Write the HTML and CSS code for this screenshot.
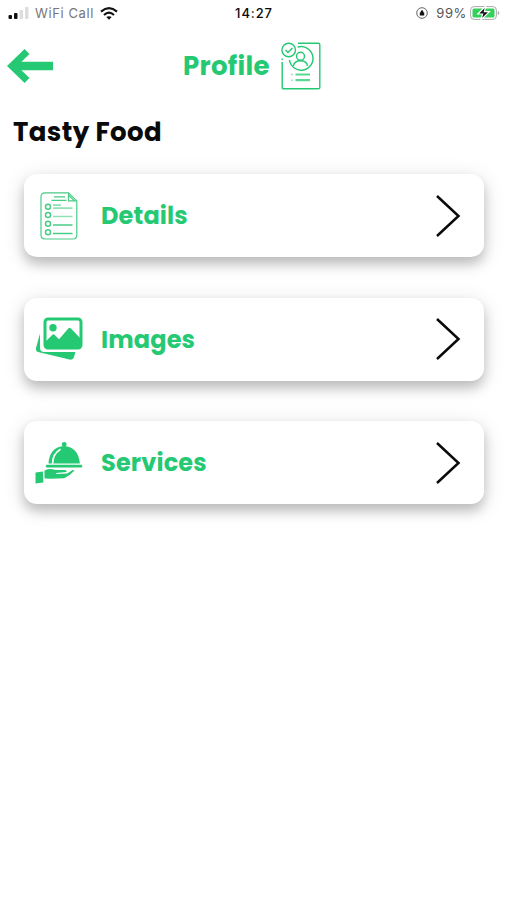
FILE: index.html
```
<!DOCTYPE html>
<html lang="en">
<head>
  <meta charset="UTF-8">
  <meta name="viewport" content="width=device-width, initial-scale=1.0">
  <title>Profile</title>
  <link rel="stylesheet" href="styles.css">
</head>
<body>
  <div class="status-bar">
    <div class="status-left">
      <svg width="22" height="12" viewBox="0 0 22 12">
        <rect x="0.5" y="8" width="3.5" height="4" rx="1" fill="#111"/>
        <rect x="6" y="6" width="3.5" height="6" rx="1" fill="#111"/>
        <rect x="11.5" y="3" width="3.5" height="9" rx="1" fill="#ddd"/>
        <rect x="17" y="0" width="3.5" height="12" rx="1" fill="#ddd"/>
      </svg>
      <span class="carrier">WiFi Call</span>
      <svg class="wifi" width="18" height="13" viewBox="0 0 18 13" fill="none" stroke="#111" stroke-width="2.1">
        <path d="M1 4.6Q9-2.2 17 4.6M4 8Q9 3.4 14 8"/>
        <path d="M6.3 10.1Q9 8.2 11.7 10.1L9 12.8Z" fill="#111" stroke="none"/>
      </svg>
    </div>
    <span class="time">14:27</span>
    <div class="status-right">
      <svg width="12" height="12" viewBox="0 0 12 12" fill="none" stroke="#555">
        <circle cx="6" cy="6" r="5.3" stroke-width=".9"/>
        <path d="M3.8 8.6V5.4h.7Q4.6 3.3 6 3.3t1.5 2.1h.7v3.2z" fill="#111" stroke="none"/>
      </svg>
      <span class="percent">99%</span>
      <svg width="30" height="14" viewBox="0 0 30 14">
        <rect x=".6" y=".6" width="25.8" height="12.8" rx="3.5" fill="#fff" stroke="#aaa"/>
        <rect x="2.5" y="2.5" width="22" height="9" rx="1.5" fill="#35d05c"/>
        <path d="M27.8 5v4q1.6-.5 1.6-2t-1.6-2" fill="#aaa"/>
        <path d="M15.8 0L7.8 8h4.8l-1.8 6 8.6-8.3h-5z" fill="#111" stroke="#fff" stroke-width="1.2"/>
      </svg>
    </div>
  </div>

  <div class="header">
    <svg class="back" width="47" height="35" viewBox="0 0 47 35" fill="none" stroke="#26c973">
      <path d="M46 17H6" stroke-width="8.5"/>
      <path d="M20 2.5L5 17 20 31.5" stroke-width="7"/>
    </svg>
    <h1>Profile</h1>
    <svg class="profile-icon" width="40" height="48" viewBox="0 0 40 48" fill="none" stroke="#25c873" stroke-width="1.4">
      <path d="M17 1.2h20.5q1.3 0 1.3 1.3v43q0 1.3-1.3 1.3H2.5q-1.3 0-1.3-1.3V20M1.2 16.5v1.5"/>
      <circle cx="7.7" cy="8" r="6.8"/>
      <path d="M4.5 8l2.4 2.5 4.6-4.6M16.5 5.2A11.8 11.8 0 1 1 8.5 18"/>
      <circle cx="19.5" cy="14.3" r="4"/>
      <path d="M12.4 24q.8-5.3 7.1-5.3t7.1 5.3"/>
      <path d="M14.5 32.5H29M14.5 38.2H29" stroke-width="2.2" opacity=".75"/>
      <path d="M10 32.5h2M10 38.2h2" stroke-width="1.5" opacity=".45"/>
    </svg>
  </div>

  <h2>Tasty Food</h2>

  <div class="menu">
    <div class="card">
      <div class="icon">
        <svg width="38" height="48" viewBox="0 0 38 48" fill="none" stroke="#48cc86" stroke-width="1.2">
          <path d="M5 .9h23.5l8.3 8V43q0 4-4 4H5q-4 0-4-4V5Q1 .9 5 .9z"/>
          <path d="M28.5.9v8h8.3M28.5 3l6 5.9"/>
          <path d="M14 4.8h11M11.5 8.3h15" stroke-width="1.3"/>
          <g stroke-width="1.5">
            <circle cx="8" cy="14.7" r="2.5"/>
            <circle cx="8" cy="23" r="2.5"/>
            <circle cx="8" cy="31.7" r="2.5"/>
            <circle cx="8" cy="40.3" r="2.5"/>
          </g>
          <path d="M13 13.2h8M13 16.2h19.5M13 24.5h19.5" stroke-width="1.7" opacity=".6"/>
          <path d="M13 33h19.5M13 41.5h19.5" stroke-width="1.7"/>
        </svg>
      </div>
      <span class="label">Details</span>
      <svg class="chevron" width="26" height="44" viewBox="0 0 26 44"><path d="M2 2l21.5 20L2 42"/></svg>
    </div>

    <div class="card">
      <div class="icon">
        <svg width="48" height="44" viewBox="0 0 48 44">
          <path d="M5 16.5v14.5q0 4 4.5 4h31l-1.5 5q-1 3.3-4.5 2.5L3 35Q.5 34 1 31z" fill="#26c973"/>
          <rect x="10" y="2" width="36" height="29" rx="3" fill="#fff" stroke="#26c973" stroke-width="3"/>
          <circle cx="18" cy="10.7" r="3.7" fill="#26c973"/>
          <path d="M10.5 24.5l7-6.8q1-.9 2 0l4.5 4.5 9.3-10.8q1.3-1.4 2.6 0L46 22v8.5H10.5z" fill="#26c973"/>
        </svg>
      </div>
      <span class="label">Images</span>
      <svg class="chevron" width="26" height="44" viewBox="0 0 26 44"><path d="M2 2l21.5 20L2 42"/></svg>
    </div>

    <div class="card">
      <div class="icon">
        <svg width="48" height="42" viewBox="0 0 48 42" fill="#26c973">
          <circle cx="29.2" cy="2.5" r="2.4"/>
          <path d="M13.5 21.5Q14.5 5 29 4q14.5 1 15.8 17.5z"/>
          <path d="M17.6 21.7Q17.5 12 25.5 7.2" fill="none" stroke="#fff" stroke-width="1.7"/>
          <rect x="10.8" y="22.7" width="36.4" height="2.8" rx="1.2"/>
          <path d="M.5 30.5l7.4-1 .5 11-7.9 1z"/>
          <path d="M9.5 28.5q4-1.8 8-1.3l3 .7h10q2 .8.8 2.2l-10.1.9v.9l11-.3 5-3.4q1.8-.6 2.1.5-5 5.5-10.2 7.5-9.8.6-17.9.4l-1.7-.2z"/>
        </svg>
      </div>
      <span class="label">Services</span>
      <svg class="chevron" width="26" height="44" viewBox="0 0 26 44"><path d="M2 2l21.5 20L2 42"/></svg>
    </div>
  </div>
</body>
</html>
```
FILE: styles.css
```
* {
  box-sizing: border-box;
}
body {
  min-height: 100vh;
  margin: 0;
  background-color: #fff;
  font-family: Poppins, Inter, sans-serif;
  color: #0a0a0a;
}
svg {
  display: block;
  flex-shrink: 0;
}
.status-bar {
  display: grid;
  grid-template-columns: 1fr auto 1fr;
  align-items: center;
  height: 26px;
  padding: 0 6px 0 8px;
  font-family: Inter, sans-serif;
  font-size: 13px;
  line-height: 26px;
}
.status-left, .status-right {
  display: flex;
  align-items: center;
}
.status-right {
  justify-content: flex-end;
}
.carrier {
  width: 60px;
  margin-left: 5px;
  color: #777;
  letter-spacing: 0.6px;
  white-space: nowrap;
}
.wifi {
  margin-left: 5px;
}
.time {
  font-weight: 500;
  letter-spacing: 0.9px;
}
.percent {
  margin: 0 3px 0 8px;
  color: #555;
  letter-spacing: 0.6px;
}
.header {
  display: flex;
  align-items: center;
  height: 80px;
  padding-left: 7px;
}
h1, h2 {
  margin: 0;
  font-size: 26px;
  font-weight: 700;
  white-space: nowrap;
}
h1 {
  width: 98px;
  margin-left: 129px;
  color: #26c973;
  letter-spacing: 0.3px;
}
h2 {
  height: 68px;
  padding-left: 13px;
  line-height: 52px;
  letter-spacing: 0.4px;
}
.menu {
  display: flex;
  flex-direction: column;
  gap: 40.5px;
  padding: 0 22.5px 50px 24px;
}
.card {
  display: flex;
  align-items: center;
  height: 83px;
  padding: 0 23px 0 11px;
  border-radius: 13px;
  background-color: #fff;
  box-shadow: 0 7px 12px rgba(0, 0, 0, 0.2), 0 4px 22px rgba(0, 0, 0, 0.12);
}
.icon {
  display: flex;
  justify-content: center;
  width: 48px;
}
.label {
  flex: 1;
  margin-left: 18px;
  font-size: 24px;
  font-weight: 700;
  color: #26c973;
  letter-spacing: 0.15px;
}
.chevron {
  fill: none;
  stroke: #0a0a0a;
  stroke-width: 2.5;
}
```
